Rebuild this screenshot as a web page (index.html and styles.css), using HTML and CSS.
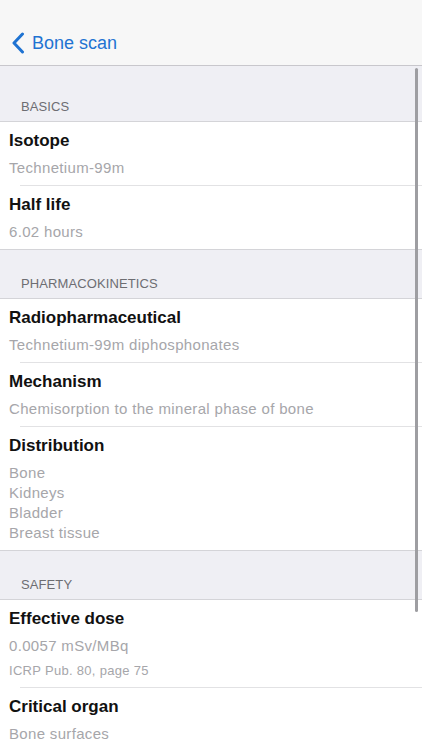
FILE: index.html
```html
<!DOCTYPE html>
<html lang="en">
<head>
  <meta charset="UTF-8">
  <meta name="viewport" content="width=device-width, initial-scale=1.0">
  <title>Bone scan</title>
  <link rel="stylesheet" href="styles.css">
</head>
<body>

  <div class="navbar">
    <a class="back" href="#">
      <svg class="chevron" width="14" height="22" viewBox="0 0 14 22">
        <path d="M11.5 2 L3 11 L11.5 20" fill="none" stroke="#1f73d2" stroke-width="3" stroke-linecap="round" stroke-linejoin="round"/>
      </svg>
      <span>Bone scan</span>
    </a>
  </div>

  <div class="list">
    <div class="section-header first">BASICS</div>
    <div class="group">
      <div class="row">
        <div class="title">Isotope</div>
        <div class="value">Technetium-99m</div>
      </div>
      <div class="row">
        <div class="title">Half life</div>
        <div class="value">6.02 hours</div>
      </div>
    </div>

    <div class="section-header">PHARMACOKINETICS</div>
    <div class="group">
      <div class="row">
        <div class="title">Radiopharmaceutical</div>
        <div class="value">Technetium-99m diphosphonates</div>
      </div>
      <div class="row">
        <div class="title">Mechanism</div>
        <div class="value">Chemisorption to the mineral phase of bone</div>
      </div>
      <div class="row">
        <div class="title">Distribution</div>
        <div class="value">Bone<br>Kidneys<br>Bladder<br>Breast tissue</div>
      </div>
    </div>

    <div class="section-header">SAFETY</div>
    <div class="group">
      <div class="row">
        <div class="title">Effective dose</div>
        <div class="value">0.0057 mSv/MBq</div>
        <div class="note">ICRP Pub. 80, page 75</div>
      </div>
      <div class="row">
        <div class="title">Critical organ</div>
        <div class="value">Bone surfaces</div>
      </div>
    </div>
  </div>

  <div class="scrollbar"></div>

</body>
</html>
```

FILE: styles.css
```css
body {
  margin: 0;
  padding: 0;
  width: 422px;
  height: 750px;
  overflow: hidden;
  position: relative;
  background: #efeff4;
  font-family: "Liberation Sans", Arial, sans-serif;
}

.navbar {
  height: 65px;
  background: #f7f7f7;
  border-bottom: 1px solid #c8c7cc;
  display: flex;
  align-items: flex-end;
  padding-left: 11px;
}

.back {
  display: flex;
  align-items: center;
  gap: 7px;
  height: 44px;
  color: #1f73d2;
  text-decoration: none;
  font-size: 18px;
}

.section-header {
  padding: 26px 0 6px 21px;
  line-height: 16px;
  font-size: 13px;
  letter-spacing: 0.1px;
  color: #6d6d72;
  border-bottom: 1px solid #d4d4d8;
}

.section-header.first {
  padding-top: 33px;
}

.group {
  background: #fff;
  border-bottom: 1px solid #d4d4d8;
}

.row {
  padding: 9px 0 7px 9px;
  position: relative;
}

.row + .row {
  padding-top: 10px;
}

.row + .row::before {
  content: "";
  position: absolute;
  top: 0;
  left: 20px;
  right: 0;
  border-top: 1px solid #e2e2e4;
}

.title {
  font-size: 17px;
  line-height: 20px;
  font-weight: bold;
  color: #111;
}

.value {
  margin-top: 7px;
  font-size: 15px;
  line-height: 20px;
  letter-spacing: 0.33px;
  color: #a6a6aa;
}

.note {
  margin-top: 5px;
  font-size: 13px;
  line-height: 19px;
  letter-spacing: 0.3px;
  color: #a6a6aa;
}

.scrollbar {
  position: absolute;
  top: 68px;
  left: 415px;
  width: 3px;
  height: 544px;
  border-radius: 2px;
  background: #9e9ea2;
}
```
